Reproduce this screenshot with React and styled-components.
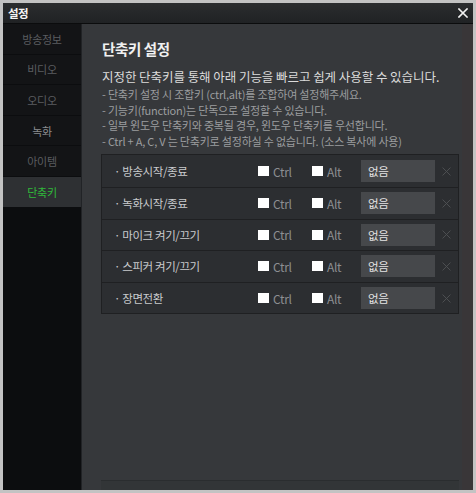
import styled, { createGlobalStyle } from 'styled-components';

const GlobalStyle = createGlobalStyle`
  html, body {
    margin: 0;
    padding: 0;
    background: #c3c3c3;
  }
  body {
    font-family: "Noto Sans CJK KR", "Noto Sans", sans-serif;
  }
  * {
    box-sizing: border-box;
  }
`;

const menus = ['방송정보', '비디오', '오디오', '녹화', '아이템', '단축키'];

const shortcuts = ['방송시작/종료', '녹화시작/종료', '마이크 켜기/끄기', '스피커 켜기/끄기', '장면전환'];

const notes = [
  '- 단축키 설정 시 조합키 (ctrl,alt)를 조합하여 설정해주세요.',
  '- 기능키(function)는 단독으로 설정할 수 있습니다.',
  '- 일부 윈도우 단축키와 중복될 경우, 윈도우 단축키를 우선합니다.',
  '- Ctrl + A, C, V 는 단축키로 설정하실 수 없습니다. (소스 복사에 사용)',
];

function CloseIcon({ size, color, width }) {
  return (
    <svg width={size} height={size} viewBox="0 0 10 10">
      <path d="M1 1 L9 9 M9 1 L1 9" stroke={color} strokeWidth={width} strokeLinecap="square" />
    </svg>
  );
}

function App() {
  return (
    <>
      <GlobalStyle />
      <Window>
        <TitleBar>
          <TitleText>설정</TitleText>
          <CloseIcon size={10} color="#f2f2f2" width={1.6} />
        </TitleBar>
        <Body>
          <Sidebar>
            {menus.map((menu, i) => (
              <MenuItem key={menu} $active={i === 5} $hover={i === 3}>
                {menu}
              </MenuItem>
            ))}
          </Sidebar>
          <Main>
            <Content>
              <Heading>단축키 설정</Heading>
              <Lead>지정한 단축키를 통해 아래 기능을 빠르고 쉽게 사용할 수 있습니다.</Lead>
              <Notes>
                {notes.map((note) => (
                  <Note key={note}>{note}</Note>
                ))}
              </Notes>
              <Table>
                {shortcuts.map((name) => (
                  <Row key={name}>
                    <Label>· {name}</Label>
                    <Check $width={54}>
                      <Box />
                      Ctrl
                    </Check>
                    <Check $width={49}>
                      <Box />
                      Alt
                    </Check>
                    <KeyInput>없음</KeyInput>
                    <Clear>
                      <CloseIcon size={9} color="#505255" width={1} />
                    </Clear>
                  </Row>
                ))}
              </Table>
            </Content>
            <Footer />
          </Main>
          <ScrollTrack />
        </Body>
      </Window>
    </>
  );
}

const Window = styled.div`
  margin: 3px;
  width: 470px;
  height: 487px;
  display: flex;
  flex-direction: column;
  background: #36383b;
`;

const TitleBar = styled.div`
  height: 21px;
  display: flex;
  align-items: center;
  justify-content: space-between;
  padding: 0 5px 1px 5px;
  background: linear-gradient(#2b2d2f, #202224);
  border-bottom: 1px solid #0b0c0d;
`;

const TitleText = styled.span`
  color: #f4f4f4;
  font-size: 11.5px;
  font-weight: 700;
  letter-spacing: -0.6px;
`;

const Body = styled.div`
  flex: 1;
  display: flex;
  min-height: 0;
`;

const Sidebar = styled.div`
  width: 79px;
  background: #0c0d0f;
  border-right: 1px solid #212326;
  display: flex;
  flex-direction: column;
  gap: 1px;
`;

const MenuItem = styled.div`
  height: 29.6px;
  display: flex;
  align-items: center;
  justify-content: center;
  font-size: 11px;
  letter-spacing: -0.3px;
  background: ${(p) => (p.$active ? '#2e3033' : '#131416')};
  color: ${(p) => (p.$active ? '#30b83a' : p.$hover ? '#8b8d90' : '#5b5d60')};
`;

const Main = styled.div`
  flex: 1;
  display: flex;
  flex-direction: column;
  padding-left: 19px;
  padding-right: 3px;
`;

const Content = styled.div`
  flex: 1;
  padding-top: 15px;
`;

const Heading = styled.h1`
  margin: 0 0 10px 1px;
  font-size: 14.5px;
  line-height: 19px;
  font-weight: 700;
  letter-spacing: -0.4px;
  color: #f0f0f0;
`;

const Lead = styled.p`
  margin: 0 0 1px 1px;
  font-size: 12.5px;
  line-height: 18px;
  letter-spacing: -0.05px;
  color: #dcdcdc;
`;

const Notes = styled.div`
  margin: 0 0 5px 1px;
`;

const Note = styled.div`
  font-size: 11px;
  line-height: 15.6px;
  letter-spacing: -0.2px;
  color: #9b9d9f;
  white-space: nowrap;
`;

const Table = styled.div`
  width: 358px;
  background: #2c2e31;
  border: 1px solid #1f2022;
  display: flex;
  flex-direction: column;
`;

const Row = styled.div`
  height: 31.6px;
  display: flex;
  align-items: center;
  padding-left: 12px;
  & + & {
    border-top: 1px solid #1f2022;
  }
`;

const Label = styled.div`
  width: 144px;
  font-size: 11.5px;
  letter-spacing: -0.4px;
  color: #c9cbcd;
  white-space: nowrap;
`;

const Check = styled.label`
  width: ${(p) => p.$width}px;
  display: flex;
  align-items: center;
  gap: 4px;
  font-size: 12px;
  letter-spacing: -0.3px;
  color: #8d8f92;
`;

const Box = styled.span`
  width: 11px;
  height: 10px;
  background: #ffffff;
`;

const KeyInput = styled.div`
  width: 74px;
  height: 22px;
  display: flex;
  align-items: center;
  padding-left: 7px;
  background: #46484b;
  color: #e4e4e4;
  font-size: 11.5px;
  letter-spacing: -0.3px;
`;

const Clear = styled.div`
  margin-left: 7px;
  display: flex;
  align-items: center;
`;

const Footer = styled.div`
  width: 358px;
  height: 10px;
  border-top: 1px solid #2a2d2f;
  background: #323537;
`;

const ScrollTrack = styled.div`
  width: 11px;
  background: #393638;
`;

export default App;
